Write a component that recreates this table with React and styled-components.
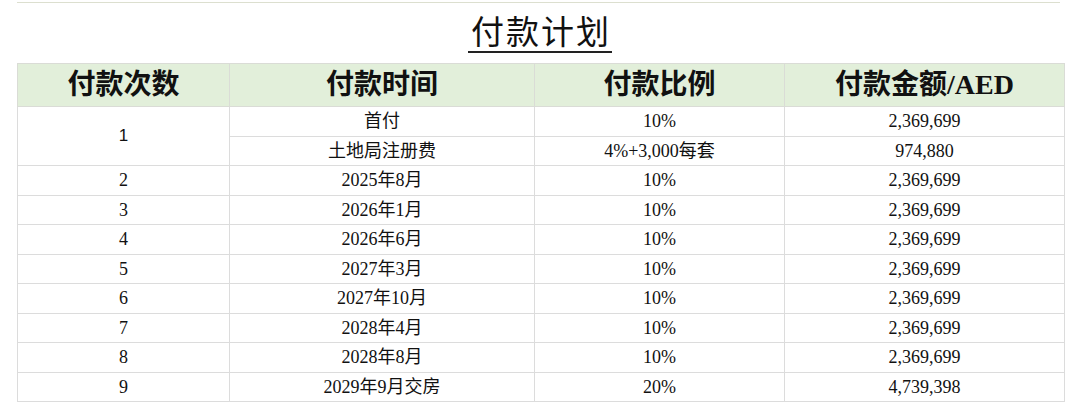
import React from 'react'
import styled, { createGlobalStyle } from 'styled-components'

const GlobalStyle = createGlobalStyle`
  html, body {
    margin: 0;
    padding: 0;
    background: #fff;
  }
`

const Page = styled.div`
  width: 1080px;
  height: 410px;
  overflow: hidden;
  padding: 0 17px;
  box-sizing: border-box;
`

const TopStrip = styled.div`
  height: 2px;
  border-bottom: 1px solid #dcdfcf;
  margin: 0 3px 0 0;
`

const TitleWrap = styled.div`
  display: flex;
  justify-content: center;
  height: 60px;
`

const Title = styled.h1`
  margin: 7px 0 0;
  height: 41px;
  font-family: "Noto Sans CJK SC", sans-serif;
  font-weight: 400;
  font-size: 33px;
  line-height: 40px;
  letter-spacing: 2px;
  color: #111;
  border-bottom: 2px solid #222;
  padding: 0 1px 0 3px;
`

const Table = styled.table`
  width: 1047px;
  border-collapse: collapse;
  table-layout: fixed;
`

const HeadCell = styled.th`
  height: 42px;
  padding: 0;
  background: #e2efda;
  border: 1px solid #dadcd6;
  font-family: "Liberation Serif", "Noto Sans CJK SC", serif;
  font-weight: 600;
  font-size: 28px;
  line-height: 40px;
  color: #111;
  text-align: center;
`

const Cell = styled.td`
  height: 28.5px;
  padding: 0;
  border: 1px solid #dcdcdc;
  font-family: ${p => p.sans ? '"Liberation Sans", sans-serif' : '"Liberation Serif", "Noto Sans CJK SC", serif'};
  font-size: ${p => p.sans ? '17px' : '18px'};
  color: #111;
  text-align: center;
  vertical-align: middle;
  line-height: 20px;
`

const rows = [
  ['2', '2025年8月', '10%', '2,369,699'],
  ['3', '2026年1月', '10%', '2,369,699'],
  ['4', '2026年6月', '10%', '2,369,699'],
  ['5', '2027年3月', '10%', '2,369,699'],
  ['6', '2027年10月', '10%', '2,369,699'],
  ['7', '2028年4月', '10%', '2,369,699'],
  ['8', '2028年8月', '10%', '2,369,699'],
  ['9', '2029年9月交房', '20%', '4,739,398'],
]

export default function App() {
  return (
    <Page>
      <GlobalStyle />
      <TopStrip />
      <TitleWrap>
        <Title>付款计划</Title>
      </TitleWrap>
      <Table>
        <colgroup>
          <col style={{ width: 212 }} />
          <col style={{ width: 305 }} />
          <col style={{ width: 250 }} />
          <col style={{ width: 280 }} />
        </colgroup>
        <thead>
          <tr>
            <HeadCell>付款次数</HeadCell>
            <HeadCell>付款时间</HeadCell>
            <HeadCell>付款比例</HeadCell>
            <HeadCell>付款金额/AED</HeadCell>
          </tr>
        </thead>
        <tbody>
          <tr>
            <Cell rowSpan={2} sans>1</Cell>
            <Cell>首付</Cell>
            <Cell>10%</Cell>
            <Cell>2,369,699</Cell>
          </tr>
          <tr>
            <Cell>土地局注册费</Cell>
            <Cell>4%+3,000每套</Cell>
            <Cell>974,880</Cell>
          </tr>
          {rows.map(r => (
            <tr key={r[0]}>
              {r.map((v, i) => <Cell key={i}>{v}</Cell>)}
            </tr>
          ))}
        </tbody>
      </Table>
    </Page>
  )
}
